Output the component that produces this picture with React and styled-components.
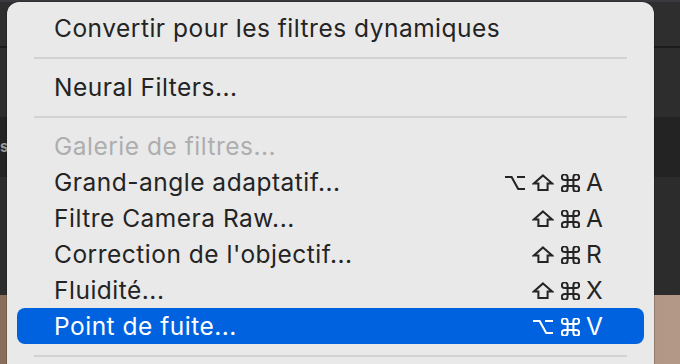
import React from "react";
import styled, { createGlobalStyle } from "styled-components";

const GlobalStyle = createGlobalStyle`
  html, body {
    margin: 0;
    padding: 0;
    background: #2b2b2b;
    overflow: hidden;
  }
`;

const Stage = styled.div`
  position: relative;
  width: 680px;
  height: 364px;
  overflow: hidden;
  display: flex;
  flex-direction: column;
  font-family: Inter, "Noto Sans", sans-serif;
`;

const Band = styled.div`
  height: ${({ $h }) => $h}px;
  flex: ${({ $grow }) => ($grow ? 1 : "none")};
  background: ${({ $bg }) => $bg};
  display: flex;
  align-items: center;
`;

const PanelTab = styled.span`
  margin: 0 0 2px 0;
  font-size: 15px;
  font-weight: 700;
  color: #9b9b9b;
`;

const Menu = styled.div`
  position: absolute;
  top: 2px;
  left: 7px;
  width: 647px;
  height: 380px;
  box-sizing: border-box;
  padding: 8px 10px;
  background: #e9e9e9;
  border-radius: 12px;
  box-shadow: 0 0 0 0.5px rgba(0, 0, 0, 0.35);
`;

const Item = styled.div`
  height: 36px;
  display: flex;
  align-items: center;
  padding: 0 38px 0 37px;
  border-radius: 8px;
  font-size: 24.5px;
  letter-spacing: 0.5px;
  color: ${({ $active, $disabled }) =>
    $active ? "#ffffff" : $disabled ? "#aeaeae" : "#242424"};
  background: ${({ $active }) => ($active ? "#0062df" : "transparent")};
`;

const Label = styled.span`
  flex: 1;
  white-space: nowrap;
`;

const Shortcut = styled.span`
  display: flex;
  align-items: center;
`;

const Mod = styled.span`
  width: 27.5px;
  height: 36px;
  display: flex;
  align-items: center;
  justify-content: center;
  svg {
    display: block;
    margin-top: 1px;
  }
`;

const Key = styled.span`
  width: 20px;
  padding-left: 2px;
  text-align: left;
  letter-spacing: 0;
`;

const Separator = styled.div`
  height: 23px;
  display: flex;
  align-items: center;
  padding: 0 17px;
  &::after {
    content: "";
    flex: 1;
    height: 2px;
    background: #d2d2d2;
  }
`;

const glyphs = {
  option: (
    <svg width="20" height="16" viewBox="0 0 20 16" fill="none" stroke="currentColor" strokeWidth="2.1">
      <path d="M0 2H6.6L13.2 14H20M12 2H20" />
    </svg>
  ),
  shift: (
    <svg width="22" height="17" viewBox="0 0 22 17" fill="none" stroke="currentColor" strokeWidth="2" strokeLinejoin="miter">
      <path d="M11 1.4L20.2 9.6H15.6V16H6.4V9.6H1.8Z" />
    </svg>
  ),
  command: (
    <svg width="19" height="18" viewBox="2.4 2.7 19.2 18.6" fill="none" stroke="currentColor" strokeWidth="2.1">
      <path d="M15 6v12a3 3 0 1 0 3-3H6a3 3 0 1 0 3 3V6a3 3 0 1 0-3 3h12a3 3 0 1 0-3-3" />
    </svg>
  ),
};

const items = [
  { label: "Convertir pour les filtres dynamiques" },
  { sep: true },
  { label: "Neural Filters..." },
  { sep: true },
  { label: "Galerie de filtres...", disabled: true },
  { label: "Grand-angle adaptatif...", mods: ["option", "shift", "command"], key: "A" },
  { label: "Filtre Camera Raw...", mods: ["shift", "command"], key: "A" },
  { label: "Correction de l'objectif...", mods: ["shift", "command"], key: "R" },
  { label: "Fluidité...", mods: ["shift", "command"], key: "X" },
  { label: "Point de fuite...", mods: ["option", "command"], key: "V", active: true },
  { sep: true },
];

export default function App() {
  return (
    <>
      <GlobalStyle />
      <Stage>
        <Band $h={2} $bg="#3a3a3e" />
        <Band $h={44} $bg="#2e2e2e" />
        <Band $h={2} $bg="#1c1c1c" />
        <Band $h={69} $bg="#2d2d2d" />
        <Band $h={60} $bg="#232323">
          <PanelTab>s</PanelTab>
        </Band>
        <Band $h={118} $bg="#2c2c2c" />
        <Band $grow $bg="linear-gradient(90deg, #8a6e5c 0%, #a5897a 50%, #b39787 100%)" />

        <Menu>
          {items.map((it, i) =>
            it.sep ? (
              <Separator key={i} />
            ) : (
              <Item key={i} $active={it.active} $disabled={it.disabled}>
                <Label>{it.label}</Label>
                {it.key && (
                  <Shortcut>
                    {it.mods.map((m) => (
                      <Mod key={m}>{glyphs[m]}</Mod>
                    ))}
                    <Key>{it.key}</Key>
                  </Shortcut>
                )}
              </Item>
            )
          )}
        </Menu>
      </Stage>
    </>
  );
}
